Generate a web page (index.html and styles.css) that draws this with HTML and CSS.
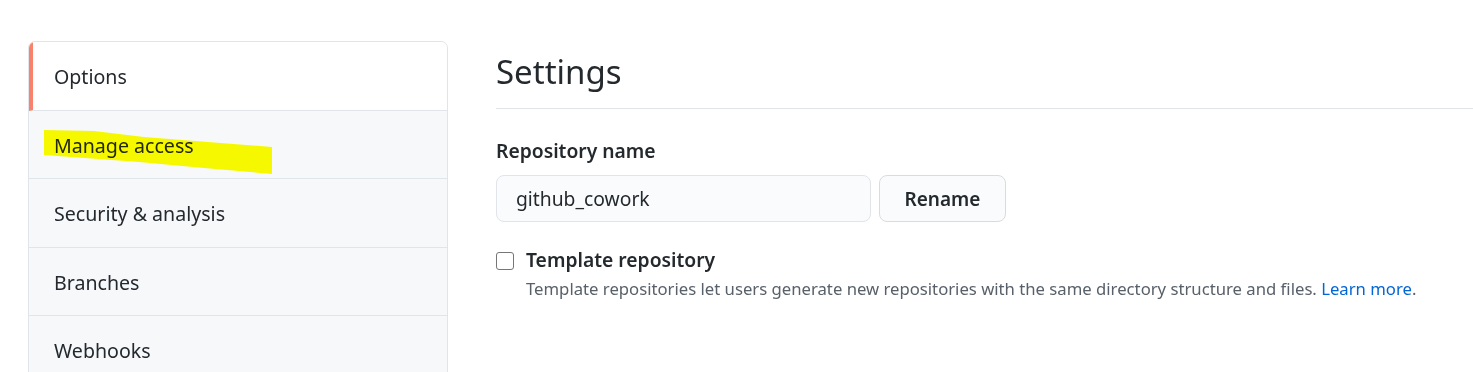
FILE: index.html
```html
<!DOCTYPE html>
<html lang="en">
<head>
    <meta charset="UTF-8">
    <title>Settings</title>
    <link rel="stylesheet" href="styles.css">
</head>
<body>
    <div class="layout">
        <nav class="menu">
            <a class="menu-item selected" href="#">Options</a>
            <a class="menu-item" href="#">Manage access</a>
            <a class="menu-item tall" href="#">Security &amp; analysis</a>
            <a class="menu-item" href="#">Branches</a>
            <a class="menu-item" href="#">Webhooks</a>
            <!-- marker stroke over "Manage access" -->
            <svg class="marker" width="240" height="50" viewBox="0 0 240 50">
                <polygon points="0,1 50,2 100,8 228,18 228,45 160,39 95,33 0,26" fill="#ffff00"/>
            </svg>
        </nav>

        <main class="content">
            <h2 class="subhead">Settings</h2>

            <label class="field-label" for="repo-name">Repository name</label>
            <div class="rename-row">
                <input id="repo-name" class="form-control" type="text" value="github_cowork">
                <button class="btn">Rename</button>
            </div>

            <div class="form-checkbox">
                <input type="checkbox" id="template">
                <div>
                    <label for="template">Template repository</label>
                    <p class="note">Template repositories let users generate new repositories with the same directory structure and files. <a href="#">Learn more</a>.</p>
                </div>
            </div>
        </main>
    </div>
</body>
</html>
```

FILE: styles.css
```css
body {
    margin: 0;
    font-family: "Noto Sans", "Open Sans", sans-serif;
    color: #24292e;
    background: #fff;
    overflow: hidden;
}
.layout {
    display: flex;
    gap: 48px;
    padding: 41px 0 0 28px;
}
.menu {
    position: relative;
    box-sizing: border-box;
    flex: 0 0 420px;
    display: flex;
    flex-direction: column;
    border: 1px solid #e1e4e8;
    border-radius: 7px;
    background: #f6f8fa;
    overflow: hidden;
    height: 400px;
}
.menu-item {
    display: block;
    height: 65px;
    line-height: 65px;
    padding: 2px 0 0 25px;
    font-size: 19.6px;
    color: #24292e;
    text-decoration: none;
    border-bottom: 1px solid #e1e4e8;
}
.menu-item.tall {
    height: 66px;
}
.menu-item.selected {
    height: 66px;
    line-height: 66px;
    background: #fff;
    border-left: 4px solid #f9826c;
    padding-left: 21px;
}
.marker {
    position: absolute;
    left: 15px;
    top: 87px;
    mix-blend-mode: multiply;
}
.content {
    flex: 1;
}
.subhead {
    margin: 0 0 28px;
    height: 66px;
    padding-top: 1px;
    line-height: 60px;
    font-size: 33px;
    font-weight: 400;
    border-bottom: 1px solid #e1e4e8;
}
.field-label {
    display: block;
    font-size: 19.3px;
    font-weight: 600;
    margin-bottom: 11px;
}
.rename-row {
    display: flex;
    gap: 8px;
}
.form-control {
    width: 375px;
    height: 47px;
    box-sizing: border-box;
    padding: 0 19px;
    font-family: inherit;
    font-size: 19.3px;
    color: #24292e;
    background: #fafbfc;
    border: 1px solid #e1e4e8;
    border-radius: 8px;
}
.btn {
    width: 127px;
    height: 47px;
    font-family: inherit;
    font-size: 19px;
    font-weight: 600;
    color: #24292e;
    background: #fafbfc;
    border: 1px solid #d9dcdf;
    border-radius: 8px;
}
.form-checkbox {
    display: flex;
    gap: 12px;
    margin-top: 28px;
}
.form-checkbox input {
    width: 18px;
    height: 18px;
    margin: 2px 0 0;
    appearance: none;
    border: 1px solid #767676;
    border-radius: 3px;
    background: #fff;
}
.form-checkbox label {
    font-size: 19.3px;
    font-weight: 600;
    line-height: 20px;
}
.note {
    margin: 5px 0 0;
    font-size: 16.7px;
    color: #586069;
}
.note a {
    color: #0366d6;
    text-decoration: none;
}
```
